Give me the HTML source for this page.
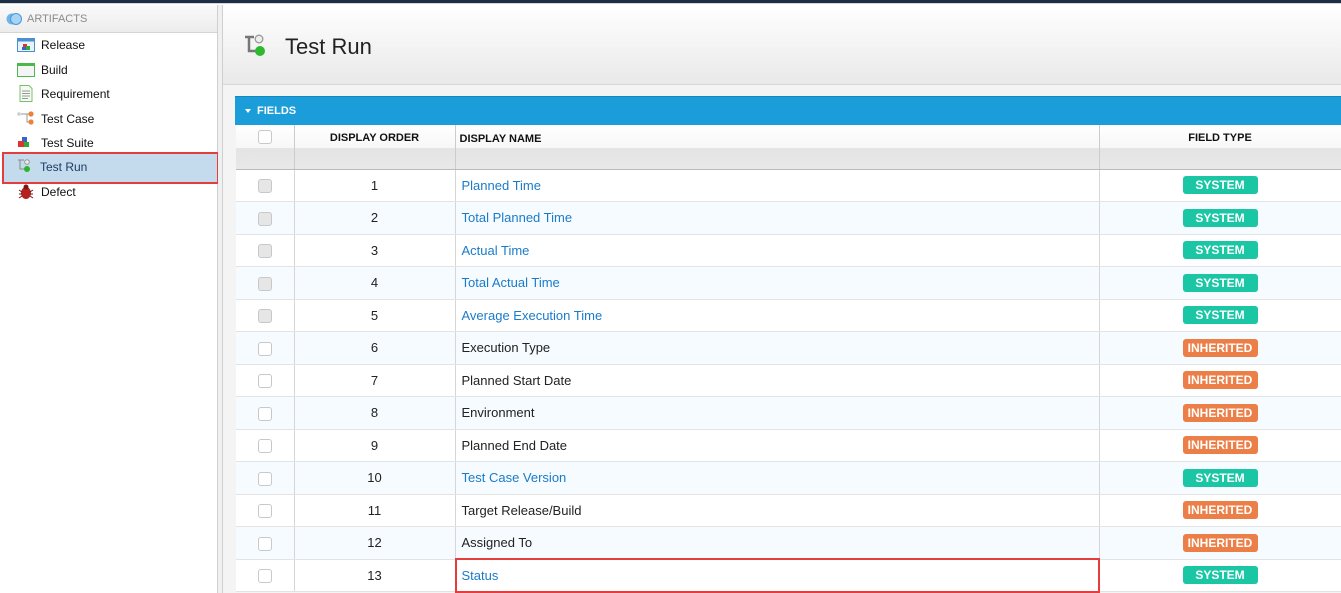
<!DOCTYPE html>
<html><head><meta charset="utf-8"><style>
*{box-sizing:border-box;margin:0;padding:0}
body{width:1341px;height:593px;overflow:hidden;background:#fff;font-family:"Liberation Sans",Arial,sans-serif;position:relative}
.topbar{position:absolute;left:0;top:0;width:1341px;height:4px;background:#1d2d44;border-bottom:1px solid #cfd6de}
.left{position:absolute;left:0;top:5px;width:218px;height:588px;background:#fff;border-right:1px solid #cfcfcf}
.lhead{height:28px;background:linear-gradient(#fafafa,#ececec);border-bottom:1px solid #d5d5d5;color:#8a8a8a;font-size:11px;line-height:28px;padding-left:27px;position:relative}
.item{position:absolute;left:41px;font-size:12px;color:#111}
.ico{position:absolute;left:17px;width:18px;height:14px}
.split{position:absolute;left:218px;top:5px;width:5px;height:588px;background:#f0f0f0;border-right:1px solid #cfcfcf}
.main{position:absolute;left:223px;top:5px;width:1118px;height:588px;background:#f4f4f4}
.hdr{position:absolute;left:0;top:0;width:1118px;height:80px;background:linear-gradient(#fff,#e9e9e9);border-bottom:1px solid #d8d8d8}
.title{position:absolute;left:62px;top:29px;font-size:22px;color:#222}
.fields{position:absolute;left:12px;top:91px;width:1106px;height:29px;background:#1a9dd8;border-top:1px solid #1387c0;color:#fff;font-weight:bold;font-size:11px;line-height:28px;padding-left:22px}
.tri{position:absolute;left:10px;top:12px;border-left:3px solid transparent;border-right:3px solid transparent;border-top:4px solid #fff}
table{position:absolute;left:236px;top:125px;border-collapse:collapse;table-layout:fixed;width:1105px}
th{height:44px;padding:0;font-size:11px;color:#111;background:linear-gradient(#fff 0,#f7f7f7 52%,#e4e4e4 53%,#e8e8e8 100%);border-right:1px solid #ccc;border-bottom:1px solid #bbb;vertical-align:top;padding-top:7px}
td{height:32.5px;border-right:1px solid #d6d6d6;border-bottom:1px solid #e3e3e3;font-size:13px;color:#222;padding:0;background:#fff}
tbody tr:nth-child(even) td{background:#f5fbfe}
td.c{text-align:center}
td.n{padding-left:6px}
.lk{color:#1b7bc9}
.cb{display:inline-block;width:14px;height:14px;border:1px solid #c8c8c8;border-radius:3px;background:#fff;vertical-align:middle}
.cbd{background:#e6e6e6}
.b{display:inline-block;width:75px;height:18px;border-radius:3px;color:#fff;font-weight:bold;font-size:12px;line-height:18px;text-align:center}
.s{background:#1bc6a4}.i{background:#ec7f48}
.red{position:absolute;border:2px solid #e53d3d}
</style></head><body>
<div class="topbar"></div>
<div class="left">
 <div class="lhead"><svg style="position:absolute;left:6px;top:7px" width="16" height="14"><circle cx="6" cy="7" r="5.5" fill="#6fb5e8"/><circle cx="10" cy="7" r="5.5" fill="#a7d4f5" stroke="#4a98d8"/></svg>ARTIFACTS</div>
</div>
<svg class="ico" style="top:38px" viewBox="0 0 18 14"><rect x="0.5" y="0.5" width="17" height="13" fill="#e8f2fb" stroke="#4a8fd0"/><rect x="0.5" y="0.5" width="17" height="3" fill="#4a8fd0"/><rect x="6" y="6" width="4" height="4" fill="#d33"/><rect x="9" y="8" width="4" height="4" fill="#3a3"/><rect x="5" y="9" width="4" height="3" fill="#36c"/></svg>
<div class="item" style="top:38px">Release</div>
<svg class="ico" style="top:63px" viewBox="0 0 18 14"><rect x="0.5" y="0.5" width="17" height="13" fill="#f4f4f4" stroke="#4cb84c"/><rect x="0.5" y="0.5" width="17" height="2.5" fill="#4cb84c"/></svg>
<div class="item" style="top:63px">Build</div>
<svg class="ico" style="top:85px;height:17px" viewBox="0 0 18 17"><path d="M3 .5h9l3 3v13H3z" fill="#f4fbf2" stroke="#7bbf6e"/><path d="M5 6h8M5 8.5h8M5 11h8M5 13.5h6" stroke="#999"/></svg>
<div class="item" style="top:87px">Requirement</div>
<svg class="ico" style="top:111px" viewBox="0 0 18 14"><circle cx="2" cy="3" r="1.8" fill="#ccc"/><path d="M4 3h8M10 3v8h2" stroke="#999" fill="none"/><circle cx="14" cy="3" r="2.6" fill="#e8833a"/><circle cx="14" cy="11" r="2.6" fill="#e8833a"/></svg>
<div class="item" style="top:112px">Test Case</div>
<svg class="ico" style="top:136px" viewBox="0 0 18 14"><rect x="5" y="1" width="5" height="5" fill="#36c"/><rect x="1" y="5" width="6" height="6" fill="#d33"/><rect x="7" y="6" width="5" height="5" fill="#3a3"/></svg>
<div class="item" style="top:136px">Test Suite</div>
<div style="position:absolute;left:4px;top:154px;width:213px;height:28px;background:#c3dbed"></div>
<svg class="ico" style="top:159px" viewBox="0 0 18 14"><path d="M3 1v9h5" stroke="#888" fill="none"/><path d="M1 1h6" stroke="#888"/><circle cx="10" cy="3" r="2.3" fill="#eee" stroke="#999"/><circle cx="10" cy="10" r="3" fill="#2bb52b"/></svg>
<div class="item" style="top:160px;left:40px;color:#1d3c66">Test Run</div>
<div class="red" style="left:2px;top:152px;width:217px;height:32px"></div>
<svg class="ico" style="top:184px;height:16px" viewBox="0 0 18 16"><ellipse cx="9" cy="9" rx="5" ry="6" fill="#b3221d"/><circle cx="9" cy="3" r="2.5" fill="#7a1512"/><path d="M2 6l3 2M2 10h3M2 14l3-2M16 6l-3 2M16 10h-3M16 14l-3-2" stroke="#7a1512"/></svg>
<div class="item" style="top:185px">Defect</div>
<div class="split"></div>
<div class="main">
 <div class="hdr">
  <svg style="position:absolute;left:20px;top:28px" width="26" height="28" viewBox="0 0 26 28"><path d="M6 4v14h8" stroke="#777" stroke-width="2.5" fill="none"/><path d="M2 4h9" stroke="#777" stroke-width="2.5"/><circle cx="16" cy="6" r="3.8" fill="#eee" stroke="#999" stroke-width="1.3"/><circle cx="17" cy="18" r="5" fill="#2db82d"/></svg>
  <div class="title">Test Run</div>
 </div>
 <div class="fields"><span class="tri"></span>FIELDS</div>
</div>
<table>
<colgroup><col style="width:58px"><col style="width:161px"><col style="width:644px"><col style="width:242px"></colgroup>
<thead><tr><th><span class="cb" style="margin-top:-2px"></span></th><th>DISPLAY ORDER</th><th style="text-align:left;padding-left:4px;padding-top:8px">DISPLAY NAME</th><th>FIELD TYPE</th></tr></thead>
<tbody>
<tr><td class="c"><span class="cb cbd"></span></td><td class="c">1</td><td class="n lk">Planned Time</td><td class="c"><span class="b s">SYSTEM</span></td></tr>
<tr><td class="c"><span class="cb cbd"></span></td><td class="c">2</td><td class="n lk">Total Planned Time</td><td class="c"><span class="b s">SYSTEM</span></td></tr>
<tr><td class="c"><span class="cb cbd"></span></td><td class="c">3</td><td class="n lk">Actual Time</td><td class="c"><span class="b s">SYSTEM</span></td></tr>
<tr><td class="c"><span class="cb cbd"></span></td><td class="c">4</td><td class="n lk">Total Actual Time</td><td class="c"><span class="b s">SYSTEM</span></td></tr>
<tr><td class="c"><span class="cb cbd"></span></td><td class="c">5</td><td class="n lk">Average Execution Time</td><td class="c"><span class="b s">SYSTEM</span></td></tr>
<tr><td class="c"><span class="cb"></span></td><td class="c">6</td><td class="n">Execution Type</td><td class="c"><span class="b i">INHERITED</span></td></tr>
<tr><td class="c"><span class="cb"></span></td><td class="c">7</td><td class="n">Planned Start Date</td><td class="c"><span class="b i">INHERITED</span></td></tr>
<tr><td class="c"><span class="cb"></span></td><td class="c">8</td><td class="n">Environment</td><td class="c"><span class="b i">INHERITED</span></td></tr>
<tr><td class="c"><span class="cb"></span></td><td class="c">9</td><td class="n">Planned End Date</td><td class="c"><span class="b i">INHERITED</span></td></tr>
<tr><td class="c"><span class="cb"></span></td><td class="c">10</td><td class="n lk">Test Case Version</td><td class="c"><span class="b s">SYSTEM</span></td></tr>
<tr><td class="c"><span class="cb"></span></td><td class="c">11</td><td class="n">Target Release/Build</td><td class="c"><span class="b i">INHERITED</span></td></tr>
<tr><td class="c"><span class="cb"></span></td><td class="c">12</td><td class="n">Assigned To</td><td class="c"><span class="b i">INHERITED</span></td></tr>
<tr><td class="c"><span class="cb"></span></td><td class="c">13</td><td class="n lk">Status</td><td class="c"><span class="b s">SYSTEM</span></td></tr>
</tbody>
</table>
<div class="red" style="left:455px;top:558px;width:645px;height:35px"></div>
</body></html>
